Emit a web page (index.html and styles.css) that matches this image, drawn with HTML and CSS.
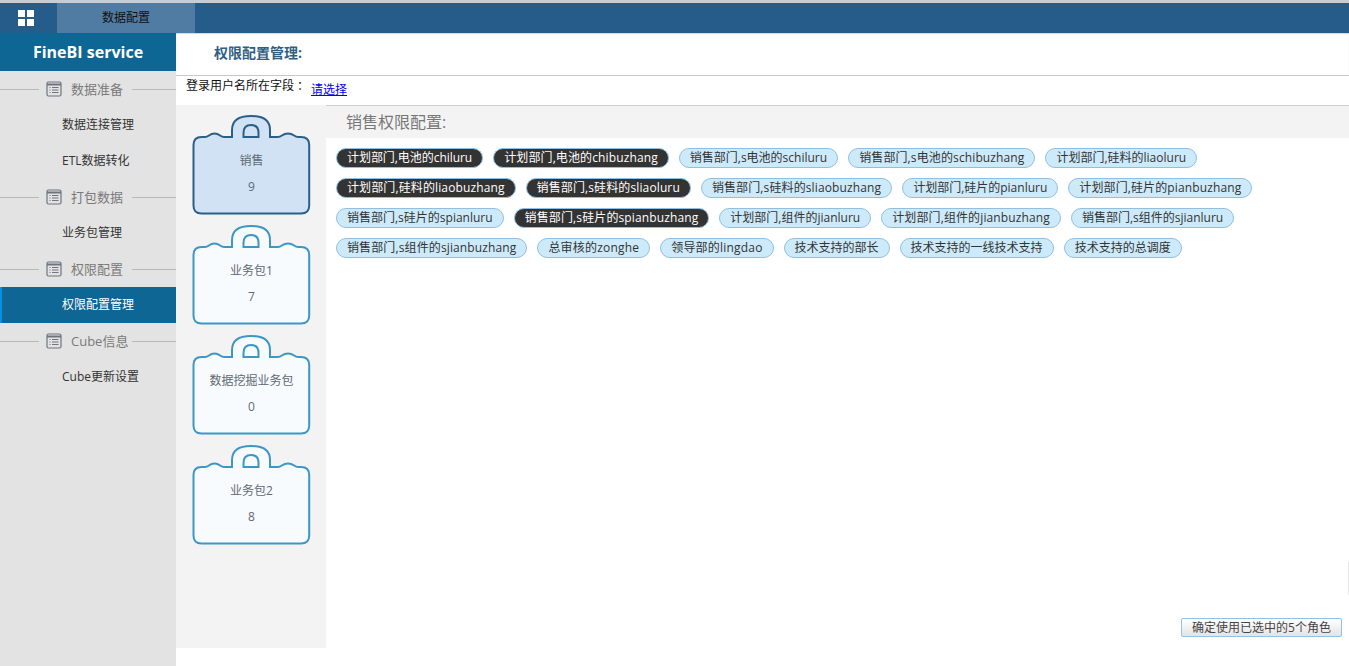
FILE: index.html
```html
<!DOCTYPE html>
<html lang="zh">
<head>
<meta charset="utf-8">
<title>FineBI service</title>
<link rel="stylesheet" href="styles.css">
</head>
<body>
<svg class="defs" width="0" height="0" aria-hidden="true">
  <defs>
    <path id="bag" d="M2.5 30Q2.5 22 10.5 22H14C18 22 18 18.5 23.5 18.5C29 18.5 29 22 33 22H41V15C41 5 49 1 60 1C71 1 79 5 79 15V22H87C91 22 91 18.5 97 18.5C103 18.5 103 22 107 22H110Q118.2 22 118.2 30V90.5Q118.2 98.5 110 98.5H10.5Q2.5 98.5 2.5 90.5Z"/>
    <path id="bagin" d="M52.5 22V18C52.5 13 55 10 60 10C65 10 67.5 13 67.5 18V22Z"/>
    <g id="list">
      <rect x="1" y="1" width="14" height="14" rx="1.5" fill="none" stroke="#6d7580" stroke-width="1.2"/>
      <path d="M1 3.5H15" stroke="#6d7580" stroke-width="2"/>
      <path d="M3.5 6.5H4.5M3.5 9H4.5M3.5 11.5H4.5M6 6.5H12.5M6 9H12.5M6 11.5H12.5" stroke="#6d7580" stroke-width="1"/>
    </g>
  </defs>
</svg>
<header class="topbar">
  <div class="grid-btn">
    <svg width="16" height="16" viewBox="0 0 16 16"><path fill="#fff" d="M0 0H7V7H0ZM9 0H16V7H9ZM0 9H7V16H0ZM9 9H16V16H9Z"/></svg>
  </div>
  <div class="tab">数据配置</div>
</header>
<div class="app">
  <nav class="sidebar">
    <div class="brand">FineBI service</div>
    <div class="group"><svg width="16" height="16" viewBox="0 0 16 16"><use href="#list"/></svg><span>数据准备</span></div>
    <div class="item">数据连接管理</div>
    <div class="item">ETL数据转化</div>
    <div class="group"><svg width="16" height="16" viewBox="0 0 16 16"><use href="#list"/></svg><span>打包数据</span></div>
    <div class="item">业务包管理</div>
    <div class="group"><svg width="16" height="16" viewBox="0 0 16 16"><use href="#list"/></svg><span>权限配置</span></div>
    <div class="item active">权限配置管理</div>
    <div class="group"><svg width="16" height="16" viewBox="0 0 16 16"><use href="#list"/></svg><span>Cube信息</span></div>
    <div class="item">Cube更新设置</div>
  </nav>
  <main class="main">
    <div class="title">权限配置管理:</div>
    <div class="login"><span class="login-label">登录用户名所在字段<span class="colon">：</span></span><a class="login-link" href="#">请选择</a></div>
    <div class="panel">
      <aside class="packs">
        <div class="pack selected"><svg class="bag" width="121" height="102" viewBox="0 0 121 102"><use href="#bag"/><use href="#bagin"/></svg><span>销售</span><span>9</span></div>
        <div class="pack"><svg class="bag" width="121" height="102" viewBox="0 0 121 102"><use href="#bag"/><use href="#bagin"/></svg><span>业务包1</span><span>7</span></div>
        <div class="pack"><svg class="bag" width="121" height="102" viewBox="0 0 121 102"><use href="#bag"/><use href="#bagin"/></svg><span>数据挖掘业务包</span><span>0</span></div>
        <div class="pack"><svg class="bag" width="121" height="102" viewBox="0 0 121 102"><use href="#bag"/><use href="#bagin"/></svg><span>业务包2</span><span>8</span></div>
      </aside>
      <section class="roles">
        <h2 class="roles-title">销售权限配置:</h2>
        <div class="chips">
          <span class="chip on tight">计划部门,电池的chiluru</span>
          <span class="chip on wide">计划部门,电池的chibuzhang</span>
          <span class="chip">销售部门,s电池的schiluru</span>
          <span class="chip wide">销售部门,s电池的schibuzhang</span>
          <span class="chip">计划部门,硅料的liaoluru</span>
          <span class="chip on wide">计划部门,硅料的liaobuzhang</span>
          <span class="chip on wide">销售部门,s硅料的sliaoluru</span>
          <span class="chip wide">销售部门,s硅料的sliaobuzhang</span>
          <span class="chip">计划部门,硅片的pianluru</span>
          <span class="chip wide">计划部门,硅片的pianbuzhang</span>
          <span class="chip">销售部门,s硅片的spianluru</span>
          <span class="chip on wide">销售部门,s硅片的spianbuzhang</span>
          <span class="chip">计划部门,组件的jianluru</span>
          <span class="chip wide">计划部门,组件的jianbuzhang</span>
          <span class="chip">销售部门,s组件的sjianluru</span>
          <span class="chip wide">销售部门,s组件的sjianbuzhang</span>
          <span class="chip wider">总审核的zonghe</span>
          <span class="chip wider">领导部的lingdao</span>
          <span class="chip">技术支持的部长</span>
          <span class="chip">技术支持的一线技术支持</span>
          <span class="chip">技术支持的总调度</span>
        </div>
        <div class="actions"><button class="confirm" type="button">确定使用已选中的5个角色</button></div>
      </section>
    </div>
  </main>
</div>
<div class="scroll-thumb"></div>
</body>
</html>
```
FILE: styles.css
```css
* { box-sizing: border-box; }
html, body { margin: 0; height: 100%; overflow: hidden; }
body {
  position: relative;
  width: 1349px;
  height: 666px;
  background: #fff;
  font-family: "Open Sans", "Noto Sans CJK SC", sans-serif;
  font-size: 12px;
  color: #333;
}
.defs { position: absolute; }
.scroll-thumb {
  position: absolute;
  right: 0;
  top: 562px;
  width: 1px;
  height: 33px;
  background: #e8e8e8;
}
.topbar {
  height: 33px;
  display: flex;
  background: #265c8a;
  border-top: 3px solid #c9cdd1;
}
.grid-btn {
  width: 57px;
  padding: 7px 0 0 18px;
}
.grid-btn svg { display: block; }
.tab {
  width: 138px;
  background: #507ba3;
  color: #111;
  text-align: center;
  line-height: 30px;
}
.app { display: flex; height: 633px; }
.sidebar { width: 176px; background: #e3e3e3; flex: none; }
.brand {
  height: 38px;
  background: #0e6694;
  color: #fff;
  font-size: 16px;
  font-weight: 700;
  text-align: center;
  line-height: 38px;
}
.group {
  height: 36px;
  display: flex;
  align-items: center;
  color: #7a7a7a;
  font-size: 13px;
}
.group::before, .group::after {
  content: "";
  height: 1px;
  background: #b9b9b9;
  flex: 1;
}
.group::before { margin-right: 7px; flex: 0 0 39px; }
.group svg { flex: none; }
.group span {
  flex: none;
  width: 70px;
  height: 36px;
  padding-left: 9px;
  line-height: 36px;
  white-space: nowrap;
}
.item {
  height: 36px;
  line-height: 36px;
  padding-left: 62px;
  color: #333;
}
.item.active {
  background: #0e6694;
  color: #fff;
  border-left: 2px solid #0a8ee0;
  padding-left: 60px;
}
.main { flex: 1; min-width: 0; display: flex; flex-direction: column; }
.title {
  height: 43px;
  line-height: 39px;
  padding-left: 38px;
  font-size: 14px;
  font-weight: 700;
  color: #2f5f85;
  border-bottom: 1px solid #c8c8c8;
  box-shadow: inset 0 1px 1px #d4d4d4;
}
.login {
  height: 29px;
  display: flex;
  padding-left: 10px;
}
.login-label { color: #111; line-height: 19px; }
.colon { margin-left: 3px; }
.login-link { color: #0000ee; line-height: 28px; margin-left: 2px; }
.panel { height: 543px; display: flex; background: #f3f3f3; }
.packs {
  width: 150px;
  flex: none;
  padding: 10px 0 0 15px;
  display: flex;
  flex-direction: column;
}
.pack {
  position: relative;
  width: 121px;
  height: 110px;
  display: flex;
  flex-direction: column;
  align-items: center;
  padding-top: 37px;
  gap: 9px;
  color: #5f6a72;
  line-height: 17px;
}
.pack span { position: relative; }
.bag {
  position: absolute;
  left: 0;
  top: 0;
  fill: #f8fbfe;
  stroke: #3d97c4;
  stroke-width: 2;
}
.pack.selected .bag { fill: #d1e2f5; stroke: #2a6088; }
.roles {
  flex: 1;
  min-width: 0;
  background: #fff;
  border-top: 1px solid #cfcfcf;
  display: flex;
  flex-direction: column;
}
.roles-title {
  margin: 0;
  height: 32px;
  background: #f3f3f3;
  padding-left: 20px;
  font-size: 16px;
  font-weight: 400;
  line-height: 33px;
  color: #777;
}
.chips {
  display: flex;
  flex-wrap: wrap;
  gap: 10px;
  padding: 10px 0 0 10px;
  flex: 1;
  align-content: flex-start;
}
.chip {
  height: 20px;
  line-height: 18px;
  padding: 0 10px;
  border: 1px solid #8fc0e3;
  border-radius: 10px;
  background: #cdeafa;
  color: #333;
}
.chip.tight { letter-spacing: -0.05px; }
.chip.wide { letter-spacing: 0.12px; }
.chip.wider { letter-spacing: 0.2px; }
.chip.on { background: #333; color: #fff; }
.actions { display: flex; justify-content: flex-end; padding: 0 7px 11px 0; }
.confirm {
  width: 161px;
  height: 19px;
  padding: 0;
  border: 1px solid #93c0e6;
  border-radius: 2px;
  background: linear-gradient(#fff, #e4e4e4);
  font: inherit;
  line-height: 17px;
  color: #444;
}
```
